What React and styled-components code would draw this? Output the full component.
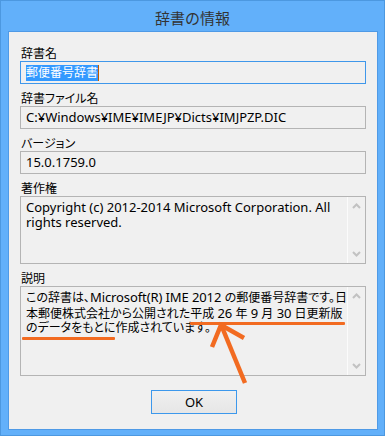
import React from 'react';
import styled, { createGlobalStyle } from 'styled-components';

const Global = createGlobalStyle`
  html, body {
    margin: 0;
    padding: 0;
    background: #62b0fa;
  }
  * { box-sizing: border-box; }
`;

const FONT = `"Noto Sans", "Noto Sans CJK JP", sans-serif`;

const Window = styled.div`
  width: 385px;
  height: 436px;
  background: #62b0fa;
  border: 1px solid #4c98e0;
  display: flex;
  flex-flow: column nowrap;
  font-family: ${FONT};
  font-feature-settings: "palt";
  color: #000;
`;

const TitleBar = styled.div`
  height: 30px;
  display: flex;
  justify-content: center;
  align-items: center;
  font-size: 15px;
  color: #333;
  padding-top: 2px;
  font-feature-settings: normal;
`;

const Client = styled.div`
  position: relative;
  width: 370px;
  height: 399px;
  margin-left: 7px;
  background: #f0f0f0;
  border: 1px solid #4f9ae6;
  padding: 14px 11px 15px 11px;
  display: flex;
  flex-flow: column nowrap;
  gap: 7px;
`;

const Field = styled.div`
  display: flex;
  flex-flow: column nowrap;
`;

const Label = styled.div`
  height: 15px;
  line-height: 15px;
  font-size: 12px;
  padding-left: 1px;
`;

const TextBox = styled.div`
  width: 346px;
  height: 23px;
  border: 1px solid ${p => (p.focused ? '#3f97ea' : '#b4b4b4')};
  padding: 0 5px;
  line-height: 21px;
  font-size: ${p => (p.latin ? 13 : 12)}px;
  white-space: nowrap;
`;

const Selected = styled.span`
  display: inline-block;
  background: #3399ff;
  color: #fff;
  line-height: 16px;
  border-right: 1px solid #c05a00;
  vertical-align: middle;
  margin-top: -2px;
`;

const Memo = styled.div`
  width: 346px;
  height: ${p => p.h}px;
  border: 1px solid #b4b4b4;
  display: flex;
  flex-flow: row nowrap;
`;

const MemoText = styled.div`
  flex: 1;
  padding: 3px 0 0 5px;
  font-size: ${p => (p.latin ? 13 : 12)}px;
  line-height: 14.6px;
  white-space: nowrap;
`;

const Lat = styled.span`
  font-size: 13px;
  letter-spacing: -0.1px;
`;

const ScrollBar = styled.div`
  width: 18px;
  border-left: 1px solid #fbfbfb;
  display: flex;
  flex-flow: column nowrap;
  justify-content: space-between;
  align-items: center;
  padding: 6px 0 6px 0;
`;

const Chevron = ({ down }) => (
  <svg width="9" height="6" viewBox="0 0 9 6">
    <path
      d={down ? 'M1 1 L4.5 4.5 L8 1' : 'M1 5 L4.5 1.5 L8 5'}
      fill="none"
      stroke="#c2c2c2"
      strokeWidth="2"
    />
  </svg>
);

const Mark = styled.span`
  position: relative;
  &::after {
    content: '';
    position: absolute;
    left: ${p => p.l}px;
    right: ${p => p.r}px;
    bottom: ${p => p.b}px;
    height: 3px;
    background: #f26b21;
    border-radius: 1px;
  }
`;

const Footer = styled.div`
  display: flex;
  justify-content: center;
  margin-top: 7px;
`;

const Button = styled.button`
  width: 86px;
  height: 24px;
  border: 1px solid #3c98ec;
  background: linear-gradient(#f0f0f0, #e6e6e6);
  font-family: ${FONT};
  font-size: 13px;
  color: #000;
  padding: 0;
  margin-left: 2px;
`;

const Arrow = styled.svg`
  position: absolute;
  left: 0;
  top: 0;
  pointer-events: none;
`;

export default function App() {
  return (
    <>
      <Global />
      <Window>
        <TitleBar>辞書の情報</TitleBar>
        <Client>
          <Field>
            <Label>辞書名</Label>
            <TextBox focused>
              <Selected>郵便番号辞書</Selected>
            </TextBox>
          </Field>
          <Field>
            <Label>辞書ファイル名</Label>
            <TextBox latin>C:¥Windows¥IME¥IMEJP¥Dicts¥IMJPZP.DIC</TextBox>
          </Field>
          <Field>
            <Label>バージョン</Label>
            <TextBox latin>15.0.1759.0</TextBox>
          </Field>
          <Field>
            <Label>著作権</Label>
            <Memo h={68}>
              <MemoText latin>
                Copyright (c) 2012-2014 Microsoft Corporation. All
                <br />
                rights reserved.
              </MemoText>
              <ScrollBar>
                <Chevron />
                <Chevron down />
              </ScrollBar>
            </Memo>
          </Field>
          <Field>
            <Label>説明</Label>
            <Memo h={90}>
              <MemoText>
                この辞書は、<Lat>Microsoft(R) IME 2012 </Lat>の郵便番号辞書です。日
                <br />
                本郵便株式会社から公開された
                <Mark l={0} r={-2} b={-3}>
                  平成<Lat> 26 </Lat>年<Lat> 9 </Lat>月<Lat> 30 </Lat>日更新版
                </Mark>
                <br />
                <Mark l={-4} r={0} b={-4}>のデータをもとに</Mark>作成されています。
              </MemoText>
              <ScrollBar>
                <Chevron />
                <Chevron down />
              </ScrollBar>
            </Memo>
          </Field>
          <Footer>
            <Button>OK</Button>
          </Footer>
          <Arrow width="370" height="399" viewBox="8 31 370 399">
            <g stroke="#f26b21" strokeWidth="4.5" fill="none" strokeLinecap="butt">
              <path d="M244 382 L221 326" />
              <path d="M211 346 L220 324 L243 337" />
            </g>
          </Arrow>
        </Client>
      </Window>
    </>
  );
}
